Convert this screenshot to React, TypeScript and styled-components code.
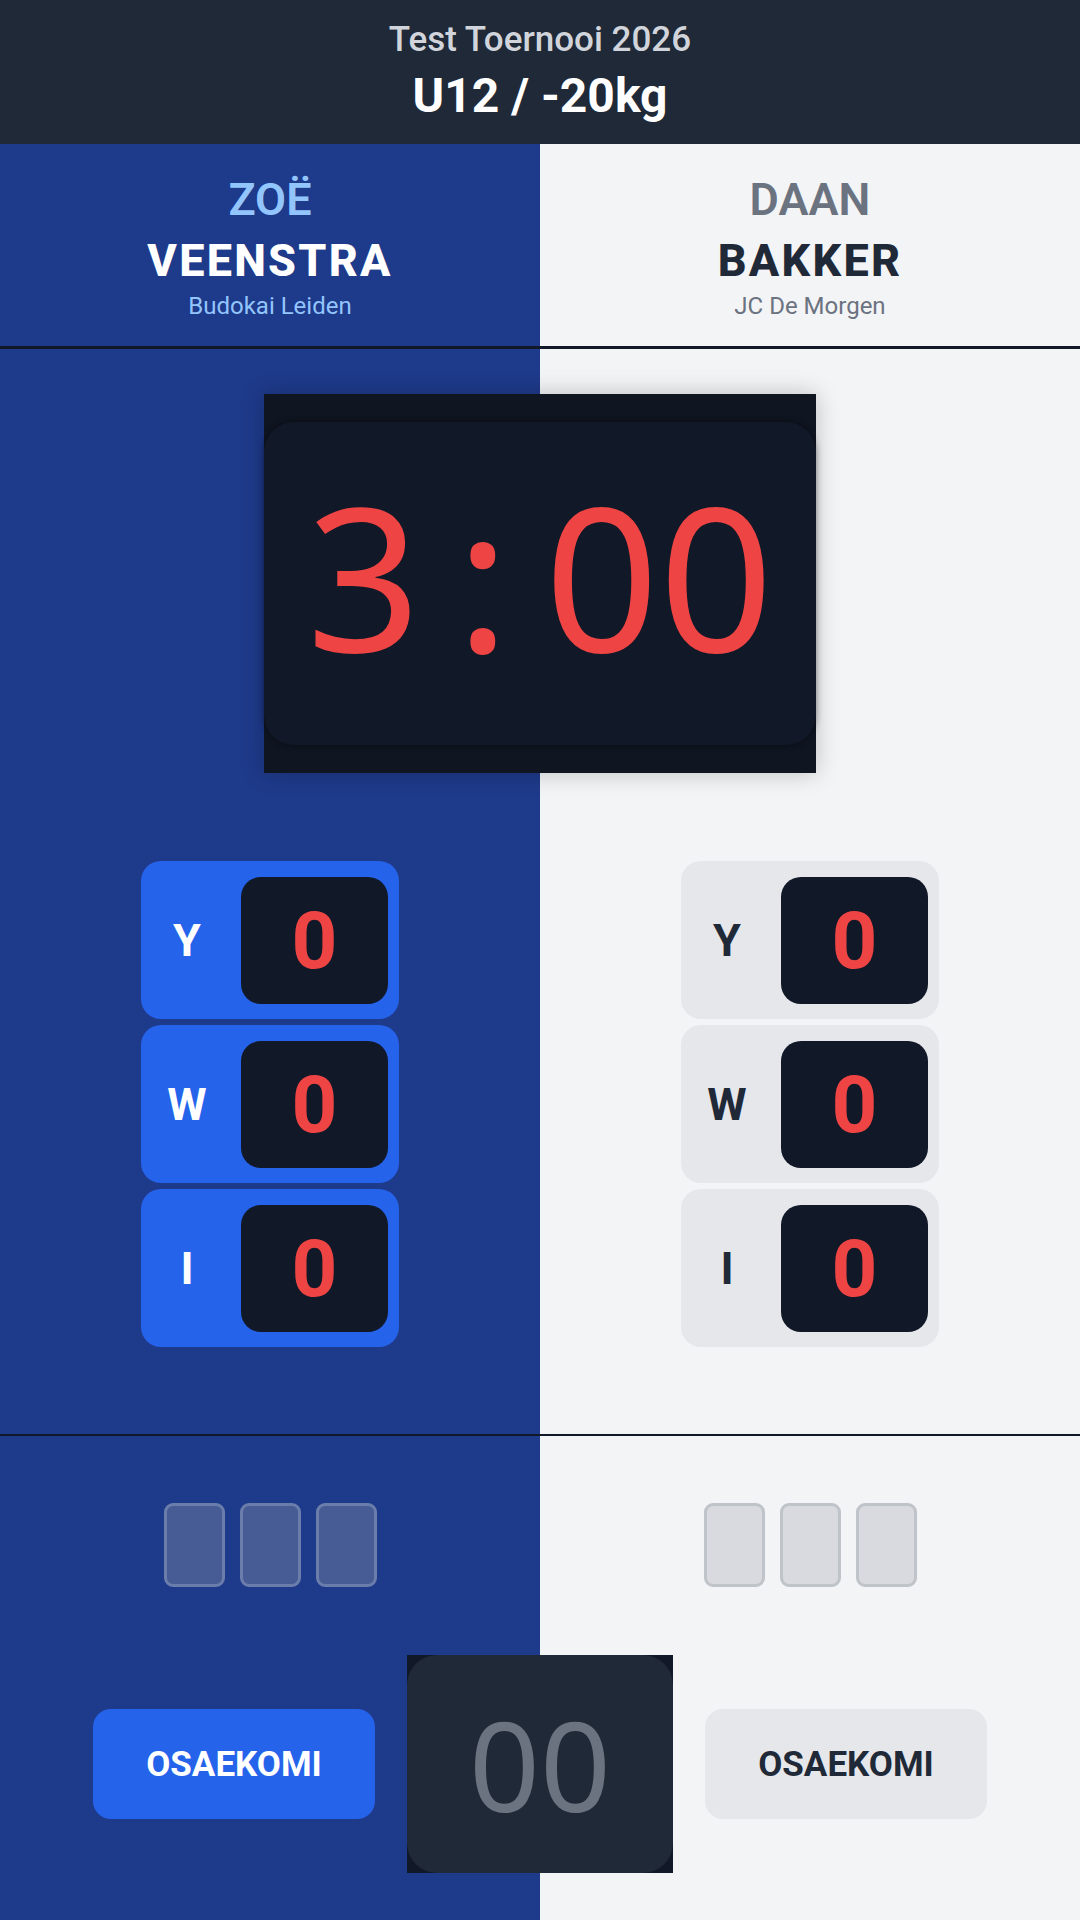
import React from "react";
import styled, { createGlobalStyle } from "styled-components";

const GlobalStyle = createGlobalStyle`
  html, body {
    margin: 0;
    padding: 0;
    background: #f3f4f6;
  }
  body {
    font-family: Roboto, "Liberation Sans", sans-serif;
  }
  * {
    box-sizing: border-box;
  }
`;

const Page = styled.div`
  width: 1080px;
  height: 1920px;
  display: flex;
  flex-direction: column;
  overflow: hidden;
`;

const TopBar = styled.header`
  height: 144px;
  background: #1f2937;
  display: flex;
  flex-direction: column;
  align-items: center;
  justify-content: center;
  gap: 6px;
`;

const Tournament = styled.div`
  font-size: 35px;
  font-weight: 500;
  color: #d1d5db;
  line-height: 1.2;
`;

const Category = styled.div`
  font-size: 48px;
  font-weight: 700;
  color: #ffffff;
  line-height: 1.2;
`;

// blue half left, white half right, runs under everything below the top bar
const Board = styled.main`
  flex: 1;
  display: flex;
  flex-direction: column;
  background: linear-gradient(90deg, #1e3a8a 50%, #f3f4f6 50%);
`;

const FighterRow = styled.section`
  display: grid;
  grid-template-columns: 1fr 1fr;
  height: 205px;
  border-bottom: 3px solid #111827;
`;

const FighterHead = styled.div<{ $blue?: boolean }>`
  display: flex;
  flex-direction: column;
  align-items: center;
  gap: 7px;
  padding-top: 29px;
  background: ${(p) => (p.$blue ? "#1e3a8a" : "#f3f4f6")};
`;

const FirstName = styled.div<{ $blue?: boolean }>`
  font-size: 45px;
  font-weight: 600;
  line-height: 1.2;
  color: ${(p) => (p.$blue ? "#93c5fd" : "#6b7280")};
`;

const LastName = styled.div<{ $blue?: boolean }>`
  font-size: 45px;
  font-weight: 800;
  line-height: 1.2;
  letter-spacing: 0.05em;
  color: ${(p) => (p.$blue ? "#ffffff" : "#1f2937")};
`;

const Club = styled.div<{ $blue?: boolean }>`
  margin-top: -3px;
  font-size: 24px;
  line-height: 1.2;
  color: ${(p) => (p.$blue ? "#93c5fd" : "#6b7280")};
`;

const Middle = styled.section`
  display: flex;
  flex-direction: column;
  align-items: center;
  padding: 45px 0 87px;
`;

const ClockFrame = styled.div`
  width: 552px;
  height: 379px;
  padding: 28px 0;
  background: #0f1521;
  box-shadow: 0 0 22px rgba(0, 0, 0, 0.22);
`;

const ClockFace = styled.div`
  height: 100%;
  border-radius: 30px;
  background: #111827;
  box-shadow: 0 0 6px rgba(0, 0, 0, 0.45);
  display: flex;
  align-items: center;
  justify-content: center;
  gap: 35px;
  padding-bottom: 18px;
  font-family: "Noto Sans", Roboto, sans-serif;
  font-size: 200px;
  line-height: 1;
  color: #ef4444;
`;

const ClockPart = styled.span``;

const ScoreGrid = styled.div`
  width: 100%;
  margin-top: 88px;
  display: grid;
  grid-template-columns: 1fr 1fr;
`;

const ScoreStack = styled.div`
  display: flex;
  flex-direction: column;
  align-items: center;
  gap: 6px;
`;

const ScoreRow = styled.div<{ $blue?: boolean }>`
  width: 258px;
  height: 158px;
  border-radius: 20px;
  padding: 16px 11px 15px 0;
  display: grid;
  grid-template-columns: 100px 1fr;
  align-items: center;
  background: ${(p) => (p.$blue ? "#2563eb" : "#e5e7eb")};
  color: ${(p) => (p.$blue ? "#ffffff" : "#1f2937")};
`;

const ScoreLabel = styled.span`
  padding-right: 8px;
  text-align: center;
  font-size: 45px;
  font-weight: 700;
`;

const ScoreBox = styled.div`
  height: 100%;
  border-radius: 20px;
  background: #111827;
  display: flex;
  align-items: center;
  justify-content: center;
  font-size: 80px;
  font-weight: 700;
  color: #ef4444;
`;

const Bottom = styled.section`
  border-top: 2px solid #111827;
  padding-top: 67px;
  display: flex;
  flex-direction: column;
  align-items: center;
`;

const ShidoGrid = styled.div`
  width: 100%;
  display: grid;
  grid-template-columns: 1fr 1fr;
`;

const ShidoCards = styled.div`
  display: flex;
  justify-content: center;
  gap: 15px;
`;

const ShidoCard = styled.div<{ $blue?: boolean }>`
  width: 61px;
  height: 84px;
  border-radius: 9px;
  border: 3px solid ${(p) => (p.$blue ? "#6b7daa" : "#bfc3ca")};
  background: ${(p) => (p.$blue ? "#475b94" : "#d9dadf")};
`;

const HoldRow = styled.div`
  margin-top: 68px;
  display: flex;
  align-items: center;
  gap: 32px;
`;

const HoldButton = styled.button<{ $blue?: boolean }>`
  width: 282px;
  height: 110px;
  border: none;
  border-radius: 18px;
  font-family: Roboto, "Liberation Sans", sans-serif;
  font-size: 35px;
  font-weight: 700;
  background: ${(p) => (p.$blue ? "#2563eb" : "#e5e7eb")};
  color: ${(p) => (p.$blue ? "#ffffff" : "#1f2937")};
  cursor: pointer;
`;

const HoldClock = styled.div`
  width: 266px;
  height: 218px;
  background: #111827;
`;

const HoldFace = styled.div`
  height: 100%;
  border-radius: 30px;
  background: #1f2937;
  display: flex;
  align-items: center;
  justify-content: center;
  font-family: "Noto Sans", Roboto, sans-serif;
  font-size: 124px;
  line-height: 1;
  color: #6b7280;
`;

type Fighter = { first: string; last: string; club: string; blue: boolean };

const fighters: Fighter[] = [
  { first: "ZOË", last: "VEENSTRA", club: "Budokai Leiden", blue: true },
  { first: "DAAN", last: "BAKKER", club: "JC De Morgen", blue: false },
];

const scoreLabels = ["Y", "W", "I"];

export default function App() {
  return (
    <>
      <GlobalStyle />
      <Page>
        <TopBar>
          <Tournament>Test Toernooi 2026</Tournament>
          <Category>U12 / -20kg</Category>
        </TopBar>
        <Board>
          <FighterRow>
            {fighters.map((f) => (
              <FighterHead key={f.last} $blue={f.blue}>
                <FirstName $blue={f.blue}>{f.first}</FirstName>
                <LastName $blue={f.blue}>{f.last}</LastName>
                <Club $blue={f.blue}>{f.club}</Club>
              </FighterHead>
            ))}
          </FighterRow>

          <Middle>
            <ClockFrame>
              <ClockFace>
                <ClockPart>3</ClockPart>
                <ClockPart>:</ClockPart>
                <ClockPart>00</ClockPart>
              </ClockFace>
            </ClockFrame>

            <ScoreGrid>
              {fighters.map((f) => (
                <ScoreStack key={f.last}>
                  {scoreLabels.map((label) => (
                    <ScoreRow key={label} $blue={f.blue}>
                      <ScoreLabel>{label}</ScoreLabel>
                      <ScoreBox>0</ScoreBox>
                    </ScoreRow>
                  ))}
                </ScoreStack>
              ))}
            </ScoreGrid>
          </Middle>

          <Bottom>
            <ShidoGrid>
              {fighters.map((f) => (
                <ShidoCards key={f.last}>
                  {[0, 1, 2].map((i) => (
                    <ShidoCard key={i} $blue={f.blue} />
                  ))}
                </ShidoCards>
              ))}
            </ShidoGrid>

            <HoldRow>
              <HoldButton $blue>OSAEKOMI</HoldButton>
              <HoldClock>
                <HoldFace>00</HoldFace>
              </HoldClock>
              <HoldButton>OSAEKOMI</HoldButton>
            </HoldRow>
          </Bottom>
        </Board>
      </Page>
    </>
  );
}
